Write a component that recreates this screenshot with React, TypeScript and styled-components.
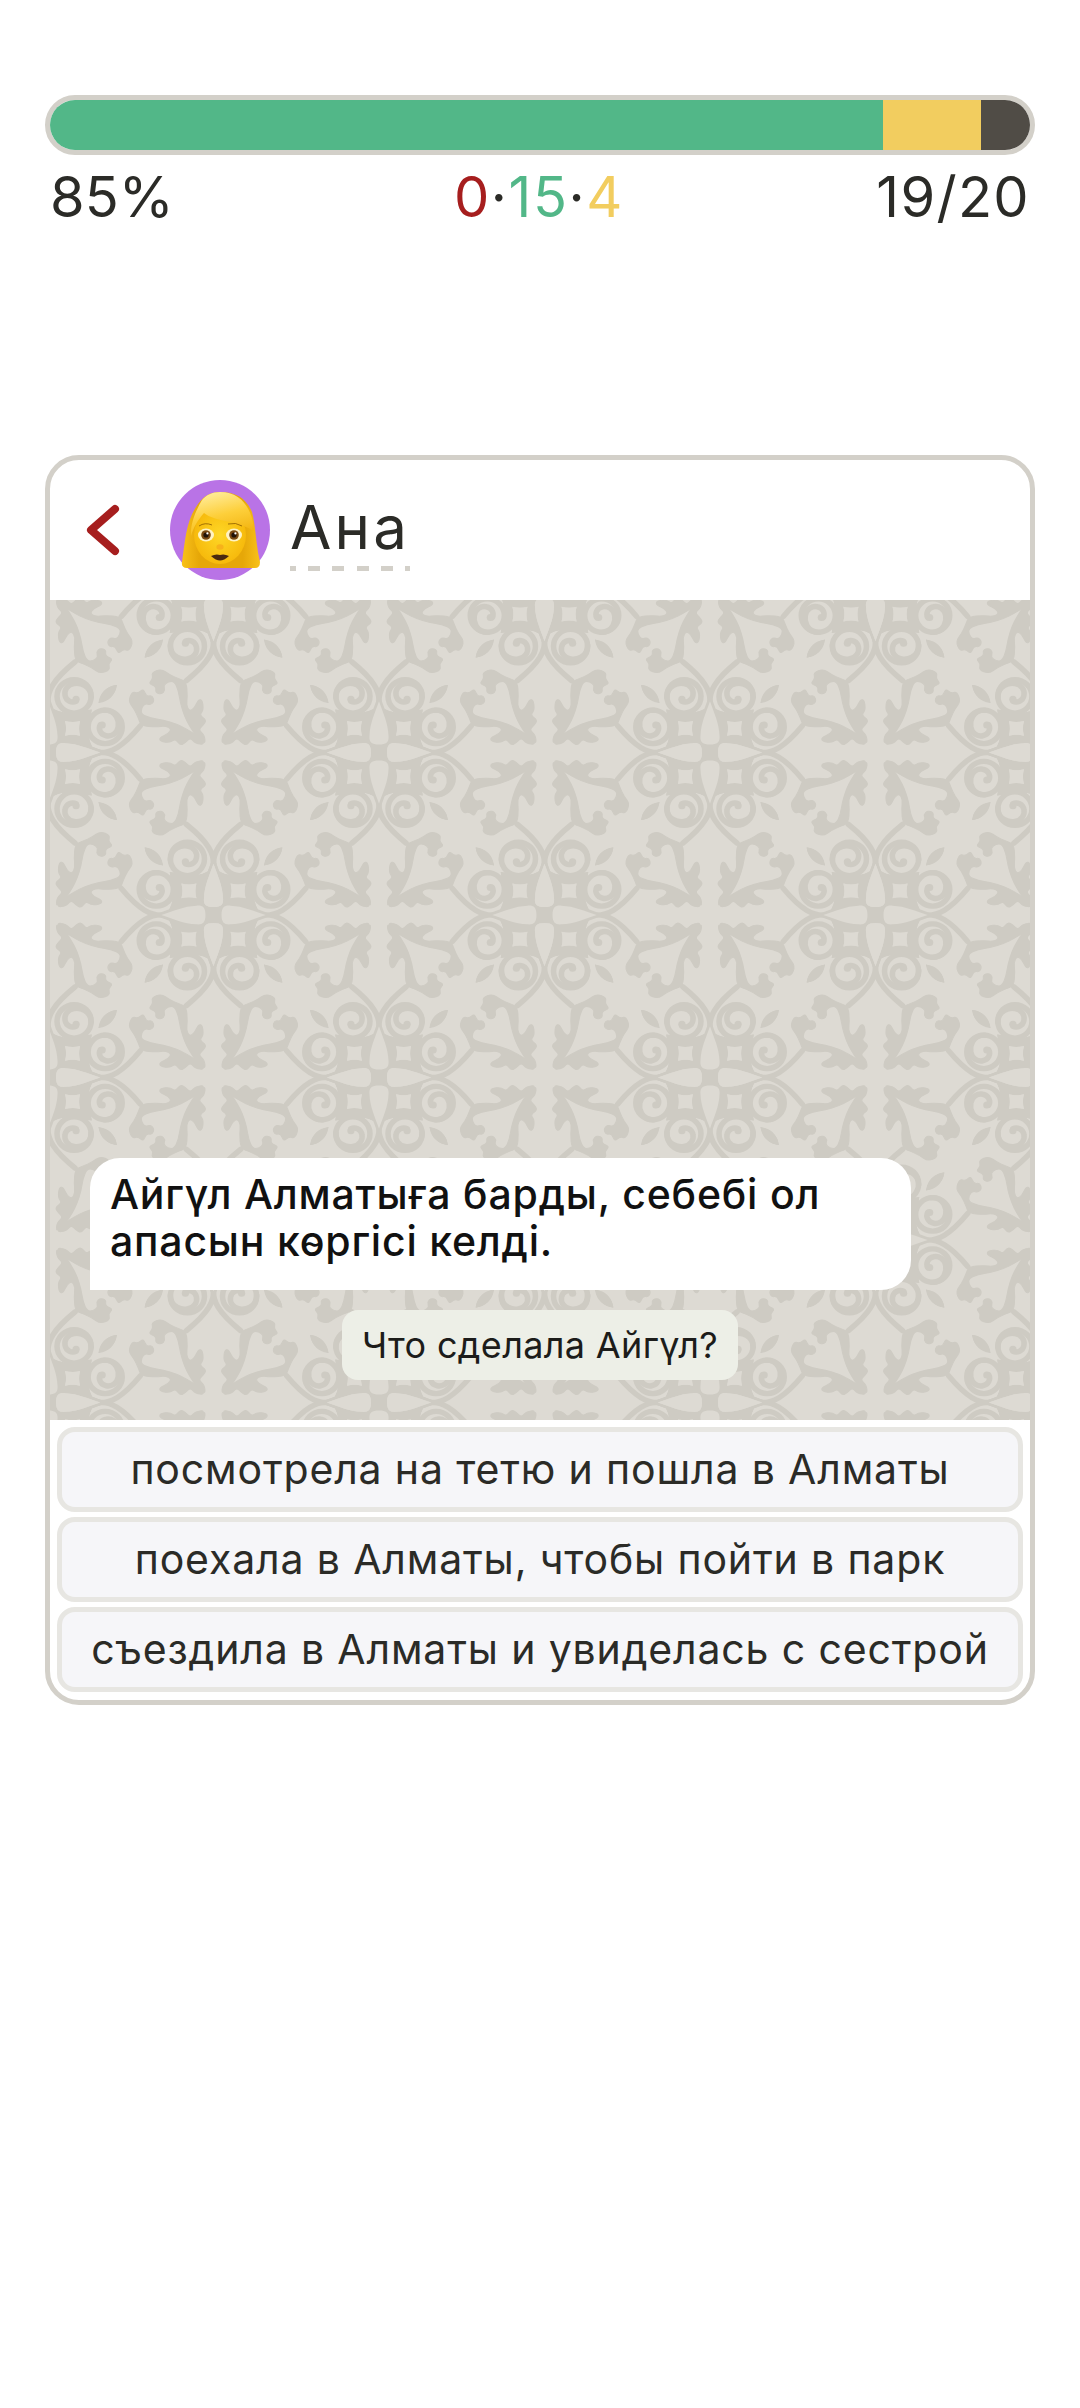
import React from 'react';
import styled, { createGlobalStyle } from 'styled-components';

const FONT = `Inter, "Noto Sans", sans-serif`;
const INK = '#2b2b27';
const BORDER = '#d3d0c9';
const PATTERN_BG = '#dddad3';
const PATTERN_INK = '#cecbc3';

// smooth closed outline through a list of points, used for the ornament tile
type Pt = [number, number];
const curve = (pts: Pt[]) => {
  const mid = (a: Pt, b: Pt): string => `${(a[0] + b[0]) / 2} ${(a[1] + b[1]) / 2}`;
  let d = `M${mid(pts[pts.length - 1], pts[0])}`;
  pts.forEach((p, i) => {
    d += `Q${p[0]} ${p[1]} ${mid(p, pts[(i + 1) % pts.length])}`;
  });
  return d + 'Z';
};

const spine = 'M165 50C166 62 160 74 138 92';
const ring = 'M122 57A17 17 0 1 0 156 57A17 17 0 1 0 122 57';
const hook = 'M122 56C122 69 134 71 139 70C146 69 149 63 148 58C147 52 141 50 137 52';
const wing = curve([
  [148, 149], [141, 138], [136, 128], [132, 115], [130, 102], [126, 93], [120, 93], [115, 97],
  [117, 102], [113, 106], [107, 104], [108, 98], [100, 95], [105, 90], [103, 84], [113, 80],
  [121, 86], [130, 90], [138, 93], [139, 108], [138, 117], [141, 123], [146, 120], [150, 111],
  [154, 112], [155, 122], [151, 127], [158, 132], [155, 137], [150, 142], [156, 147], [157, 157],
]);
const lobe = 'M165 8C157 8 155 11 155.5 17C156 30 161 40 165 52C169 40 174 30 174.5 17C175 11 173 8 165 8Z';
const leaf = 'M97 68Q98 56 114 51Q112 65 97 68Z';
const corner = 'M165 0L118 0Q127 12 125 26L122 43L139 40Q153 38 165 47Z';
const square = 'M133 17Q140 19 148 17Q146 24 148 32Q140 30 133 32Q135 24 133 17Z';

const symmetry = ['', 'matrix(0 1 1 0 0 0)', 'matrix(-1 0 0 -1 165 165)', 'matrix(0 -1 -1 0 165 165)'];
const mirrors = ['', 'matrix(-1 0 0 1 330 0)', 'matrix(1 0 0 -1 0 330)', 'matrix(-1 0 0 -1 330 330)'];

const dark = `<g fill="${PATTERN_INK}" stroke="${PATTERN_INK}" stroke-width="1"><path d="${wing}"/><path d="${leaf}"/><path d="${corner}"/></g>`;
const lines = `<g fill="none" stroke="${PATTERN_INK}" stroke-width="5.5" stroke-linecap="round"><path d="${spine}"/><path d="${lobe}"/></g>`;
// light channel of the spirals goes over the dark corner, then the spiral strokes on top
const spiralFill = `<circle cx="139" cy="57" r="17" fill="${PATTERN_BG}"/>`;
const spirals = `<g fill="none" stroke="${PATTERN_INK}" stroke-width="5.5" stroke-linecap="round"><path d="${ring}"/><path d="${hook}"/></g><circle cx="137" cy="54" r="3.6" fill="${PATTERN_INK}"/>`;
const light = `<g fill="${PATTERN_BG}"><path d="${lobe}"/><path d="${square}"/></g>`;
const layer = (content: string) =>
  mirrors
    .map(
      (m) =>
        `<g transform="${m}">${symmetry.map((s) => `<g transform="${s}">${content}</g>`).join('')}</g>`,
    )
    .join('');
const tile = `<svg xmlns="http://www.w3.org/2000/svg" width="331" height="325" viewBox="0 0 330 330" preserveAspectRatio="none"><rect width="330" height="330" fill="${PATTERN_BG}"/>${layer(dark + lines)}${layer(light + spiralFill)}${layer(spirals)}</svg>`;
const tileUrl = `url("data:image/svg+xml,${encodeURIComponent(tile)}")`;

const GlobalStyle = createGlobalStyle`
  html, body {
    margin: 0;
    background: #ffffff;
  }
  * {
    box-sizing: border-box;
  }
`;

const Page = styled.div`
  width: 1080px;
  height: 2408px;
  padding: 95px 45px 0;
  font-family: ${FONT};
  color: ${INK};
  background: #ffffff;
`;

const ProgressBar = styled.div`
  display: flex;
  height: 60px;
  border: 5px solid ${BORDER};
  border-radius: 30px;
  overflow: hidden;
`;

const Segment = styled.div<{ $color: string; $share: number }>`
  flex: 0 0 ${(p) => p.$share}%;
  background: ${(p) => p.$color};
`;

const StatsRow = styled.div`
  display: grid;
  grid-template-columns: 1fr auto 1fr;
  align-items: center;
  height: 70px;
  padding: 11px 5px 0;
  font-size: 56px;
  line-height: 62px;
`;

const StatPercent = styled.span`
  letter-spacing: 0;
`;

const StatCounts = styled.span`
  margin-left: -2px;
  letter-spacing: 1.6px;
`;

const StatTotal = styled.span`
  text-align: right;
  letter-spacing: 1.3px;
`;

const Count = styled.span<{ $color: string }>`
  color: ${(p) => p.$color};
`;

const Card = styled.div`
  margin-top: 230px;
  border: 5px solid ${BORDER};
  border-radius: 34px;
  overflow: hidden;
  background: #ffffff;
`;

const Header = styled.div`
  display: flex;
  align-items: center;
  height: 140px;
  padding-left: 33px;
`;

const BackIcon = styled.svg`
  width: 42px;
  height: 60px;
  margin-right: 45px;
`;

const Avatar = styled.svg`
  width: 100px;
  height: 100px;
  margin-right: 20px;
`;

const Name = styled.div`
  margin-top: 6px;
  padding-bottom: 13px;
  font-size: 60px;
  line-height: 62px;
  letter-spacing: 3.2px;
  background: repeating-linear-gradient(90deg, ${BORDER} 0 12px, transparent 12px 24.2px) -6px 100% / calc(100% + 6px) 5px no-repeat;
`;

const Chat = styled.div`
  display: flex;
  flex-direction: column;
  justify-content: flex-end;
  height: 820px;
  padding: 0 0 40px 40px;
  background: ${tileUrl} -2px -10px / 331px 325px;
`;

const Bubble = styled.div`
  width: 821px;
  height: 132px;
  padding: 13px 20px 0;
  border-radius: 30px 30px 30px 0;
  background: #ffffff;
  color: #111111;
  font-size: 41px;
  font-weight: 450;
  line-height: 47px;
  letter-spacing: 0.8px;
`;

const Question = styled.div`
  align-self: center;
  margin: 20px 0 0 -40px;
  padding: 0 20px;
  height: 70px;
  border-radius: 16px;
  background: #edefe7;
  color: #1c1c1a;
  font-size: 36px;
  line-height: 70px;
  letter-spacing: 0.35px;
`;

const Answers = styled.div`
  display: flex;
  flex-direction: column;
  gap: 5px;
  padding: 7px 7px 8px;
`;

const Answer = styled.div`
  height: 85px;
  border: 5px solid #e7e6e2;
  border-radius: 18px;
  background: #f6f6f9;
  font-size: 41px;
  line-height: 75px;
  text-align: center;
  letter-spacing: 0.85px;
  white-space: nowrap;
`;

const WomanAvatar = () => (
  <Avatar viewBox="0 0 100 100">
    <defs>
      <linearGradient id="hair" x1="0" x2="1" y1="0" y2="0">
        <stop offset="0" stopColor="#f9c11a" />
        <stop offset="0.22" stopColor="#e6a708" />
        <stop offset="0.78" stopColor="#e6a708" />
        <stop offset="1" stopColor="#f9c11a" />
      </linearGradient>
      <linearGradient id="fringe" x1="0.35" x2="0.7" y1="0" y2="1">
        <stop offset="0" stopColor="#ffec9a" />
        <stop offset="0.5" stopColor="#fdcf3a" />
        <stop offset="1" stopColor="#f2b20e" />
      </linearGradient>
      <radialGradient id="skin" cx="0.5" cy="0.5" r="0.62">
        <stop offset="0" stopColor="#fed726" />
        <stop offset="1" stopColor="#f5b306" />
      </radialGradient>
    </defs>
    <circle cx="50" cy="50" r="50" fill="#b973e6" />
    <path
      d="M12 82C15 62 16 42 26 27C32 17 40 12 50 12C66 12 76 18 82 32C86 48 86 66 90 82Q90 88 85 88L17 88Q11 88 12 82Z"
      fill="url(#hair)"
    />
    <ellipse cx="50" cy="55" rx="26" ry="29" fill="url(#skin)" />
    <path
      d="M32 20C26 30 20 44 21 56C24 46 28 40 34 33C45 42 66 40 84 51C83 30 72 12 50 12C42 12 36 15 32 20Z"
      fill="url(#fringe)"
    />
    <path d="M29 46Q35 42 42 45" fill="none" stroke="#8a5a00" strokeWidth="0.8" />
    <path d="M58 44Q66 42 72 46" fill="none" stroke="#8a5a00" strokeWidth="0.8" />
    <ellipse cx="36" cy="55" rx="8" ry="6.5" fill="#fff3c4" />
    <ellipse cx="64" cy="55" rx="8" ry="6.5" fill="#fff3c4" />
    <circle cx="36" cy="55" r="4.8" fill="#7a4a10" />
    <circle cx="64" cy="55" r="4.8" fill="#7a4a10" />
    <circle cx="36" cy="55" r="2.6" fill="#1f1206" />
    <circle cx="64" cy="55" r="2.6" fill="#1f1206" />
    <circle cx="37.4" cy="53.4" r="1.1" fill="#ffffff" />
    <circle cx="65.4" cy="53.4" r="1.1" fill="#ffffff" />
    <ellipse cx="50" cy="67" rx="3.6" ry="2.8" fill="#f7b21a" />
    <path d="M41 76Q46 73.5 50 75Q54 73.5 59 76Q54 80.5 50 80.5Q46 80.5 41 76Z" fill="#4a2a10" />
  </Avatar>
);

const App = () => (
  <Page>
    <GlobalStyle />
    <ProgressBar>
      <Segment $color="#52b788" $share={85} />
      <Segment $color="#f2cd5f" $share={10} />
      <Segment $color="#504c46" $share={5} />
    </ProgressBar>
    <StatsRow>
      <StatPercent>85%</StatPercent>
      <StatCounts>
        <Count $color="#a61e1e">0</Count>·<Count $color="#52b788">15</Count>·
        <Count $color="#f2cd5f">4</Count>
      </StatCounts>
      <StatTotal>19/20</StatTotal>
    </StatsRow>
    <Card>
      <Header>
        <BackIcon viewBox="0 0 42 60">
          <path
            d="M32 9L8 30L32 51"
            fill="none"
            stroke="#a61e1e"
            strokeWidth="8"
            strokeLinecap="round"
            strokeLinejoin="round"
          />
        </BackIcon>
        <WomanAvatar />
        <Name>Ана</Name>
      </Header>
      <Chat>
        <Bubble>
          Айгүл Алматыға барды, себебі ол
          <br />
          апасын көргісі келді.
        </Bubble>
        <Question>Что сделала Айгүл?</Question>
      </Chat>
      <Answers>
        <Answer>посмотрела на тетю и пошла в Алматы</Answer>
        <Answer>поехала в Алматы, чтобы пойти в парк</Answer>
        <Answer>съездила в Алматы и увиделась с сестрой</Answer>
      </Answers>
    </Card>
  </Page>
);

export default App;
